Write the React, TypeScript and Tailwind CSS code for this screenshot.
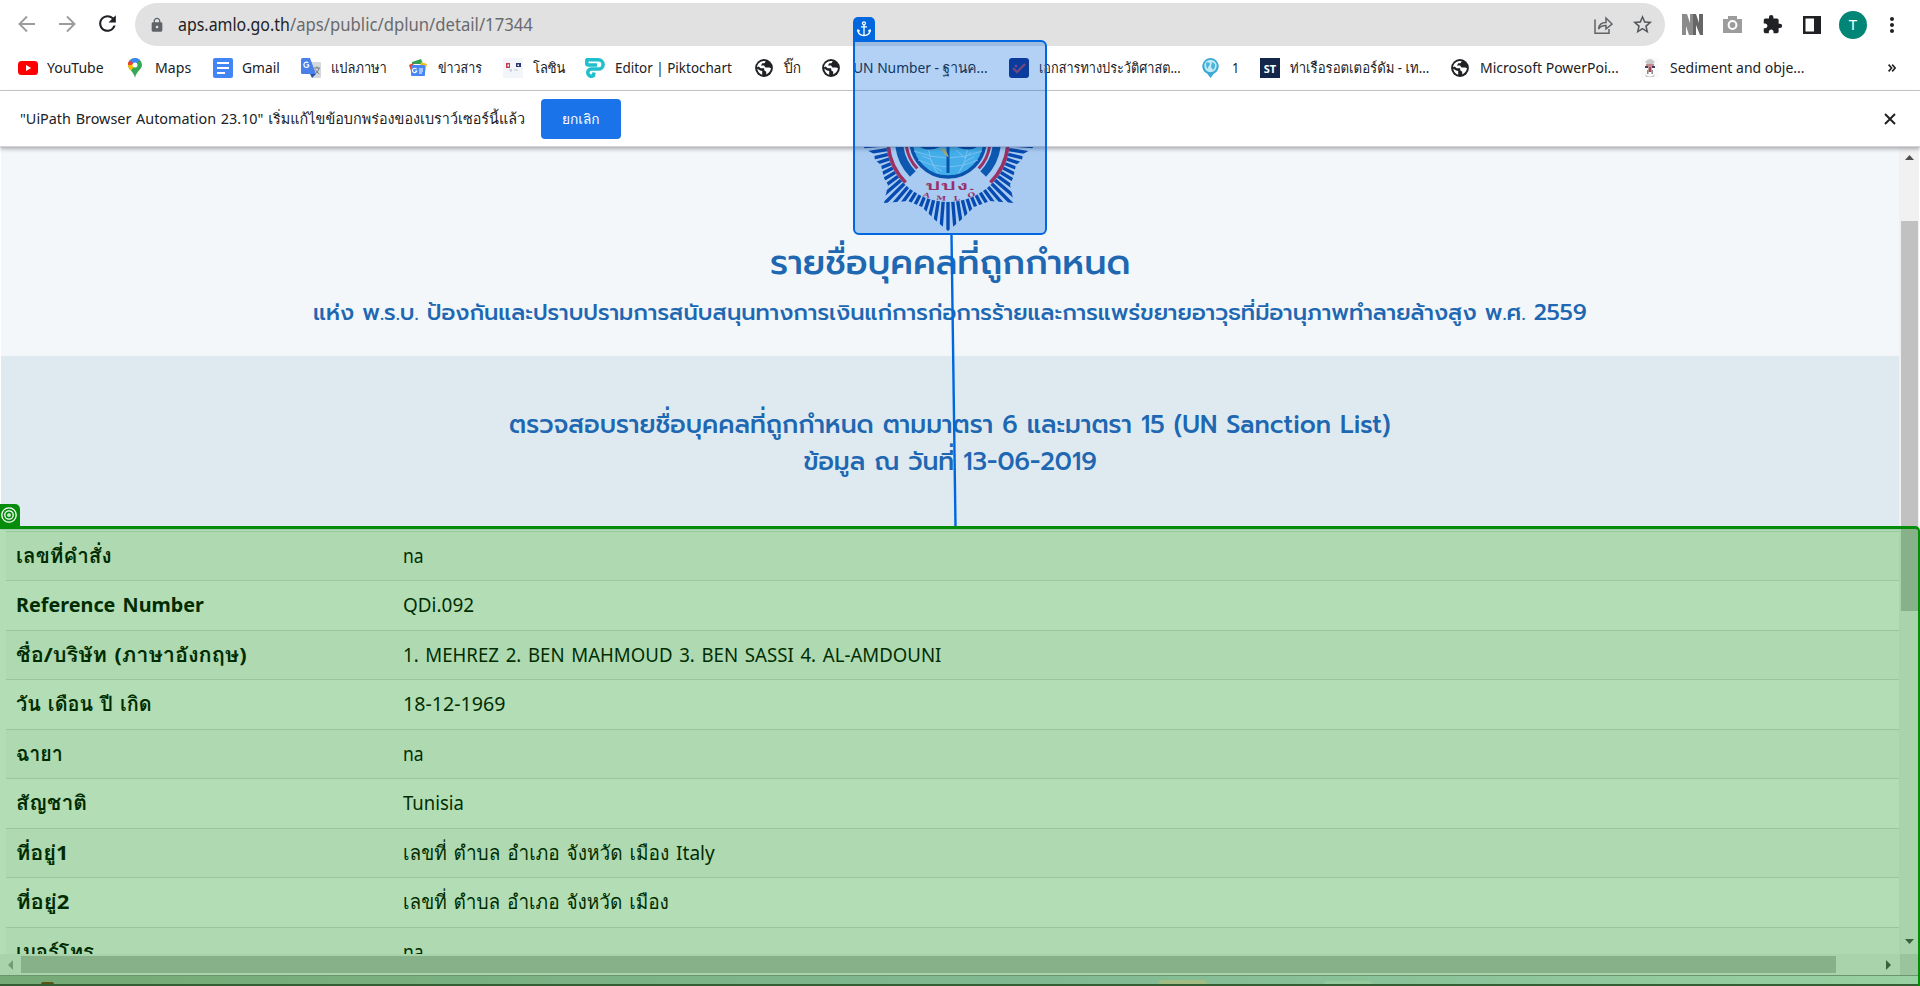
import { useLayoutEffect, useRef, useState, type ReactNode } from "react";
import { MdExtension, MdLock, MdStarBorder, MdRefresh, MdMoreVert } from "react-icons/md";

const UI = "font-['Noto_Sans','Loma',sans-serif]";

/* Single line of text stretched or squeezed to the width of its box. */
function Fit({ className, children }: { className: string; children: ReactNode }) {
  const box = useRef<HTMLDivElement>(null);
  const text = useRef<HTMLSpanElement>(null);
  const [scale, setScale] = useState(1);
  useLayoutEffect(() => {
    if (box.current && text.current) setScale(box.current.clientWidth / text.current.offsetWidth);
  }, []);
  return (
    <div ref={box} className={`shrink-0 whitespace-nowrap ${className}`}>
      <span ref={text} className="inline-block origin-left" style={{ transform: `scaleX(${scale})` }}>
        {children}
      </span>
    </div>
  );
}

function Arrow({ className }: { className: string }) {
  return (
    <svg viewBox="0 0 18 18" className={className} fill="none" stroke="#9a9c9e" strokeWidth="1.9">
      <path d="M17 9H2M9 1.5 1.5 9 9 16.500" />
    </svg>
  );
}

function Globe() {
  return (
    <svg viewBox="0 0 18 18" className="h-[18px] w-[18px]">
      <circle cx="9" cy="9" r="8.900" fill="#1f2124" />
      <path d="M10.800 2.300 9.500 4.200H7.200L6 6.500h3l1.500 2h3.800l1.700.8c-.4 3-2.200 5-4.800 6.100v-2.600l-2-1.600V9.300H5.800L3.600 7.600 2 8.200C2.200 4.800 5 2 9 1.900z" fill="#fff" />
      <path d="M2.300 9.500 5 11.500l2.200.5v3.800C4.600 15.200 2.500 12.500 2.300 9.500z" fill="#fff" />
      <path d="M9.500 4.200 12 3l2.500 2-1.500 2.200h-2.500z" fill="#1f2124" />
    </svg>
  );
}

function YouTube() {
  return (
    <svg viewBox="0 0 20 20" className="h-5 w-5">
      <rect y="3" width="20" height="14" rx="3.500" fill="#f00" />
      <path d="m8 7 5.200 3L8 13z" fill="#fff" />
    </svg>
  );
}

function MapsPin() {
  return (
    <svg viewBox="0 0 14 20" className="h-5 w-[14px]">
      <path d="M7 0a7 7 0 0 0-7 7c0 4.500 5.700 6 7 13 1.300-7 7-8.500 7-13a7 7 0 0 0-7-7z" fill="#34a853" />
      <path d="M7 0a7 7 0 0 0-5.400 2.500L7 7l4.700-5.200A7 7 0 0 0 7 0z" fill="#4285f4" />
      <path d="M1.600 2.500A7 7 0 0 0 0 7h7z" fill="#ea4335" />
      <path d="M0 7c0 2.300 1.400 3.800 3 5.500L9 5z" fill="#fbbc04" />
      <path d="M0 7a7 7 0 0 1 1.600-4.500L5 5.300 3.500 7z" fill="#ea4335" />
      <circle cx="7" cy="7" r="2.500" fill="#fff" />
    </svg>
  );
}

function DocIcon() {
  return (
    <svg viewBox="0 0 20 20" className="h-5 w-5">
      <rect width="20" height="20" rx="2" fill="#4285f4" />
      <path d="M4 5h12M4 10h12M4 15h8" stroke="#fff" strokeWidth="2.200" />
    </svg>
  );
}

function TranslateIcon() {
  return (
    <svg viewBox="0 0 20 20" className="h-5 w-5">
      <path d="M8 4h11q1 0 1 1v14q0 1-1 1h-8z" fill="#d5d8dc" />
      <path d="M1.500 0H9l6 16H1.500Q0 16 0 14.500v-13Q0 0 1.500 0z" fill="#4a80ea" />
      <path d="m9 16h6l-4 4z" fill="#2b55a8" />
      <path d="M8 6.800H5.700M7.300 4.900a2.600 2.600 0 1 0 .8 2.200" fill="none" stroke="#fff" strokeWidth="1.200" />
      <path d="M13 10h6M16 8.500V10M18 10c-.5 3-2.500 5-4 6M14.500 11.500c.5 1.500 2 3.500 3.700 4.300" fill="none" stroke="#6f7a83" />
    </svg>
  );
}

function NewsIcon() {
  return (
    <svg viewBox="0 0 18 18" className="h-[18px] w-[18px]">
      <path d="M3 3 12 0l2 5H3z" fill="#2fa24f" />
      <path d="m0 6 4-2 3 9-4 2z" fill="#e0483b" />
      <path d="m12 3 6 2-2 9-6-2z" fill="#f7bd20" />
      <rect x="2" y="6" width="14" height="11" rx="1" fill="#4886f0" />
      <path d="M7.600 10.300a2.200 2.200 0 1 0 .2 1.700H6M10 10h4M10 12h4M10 14h3" fill="none" stroke="#fff" strokeWidth="1.100" />
    </svg>
  );
}

function FacesIcon() {
  return (
    <svg viewBox="0 0 20 20" className="h-5 w-5">
      <rect width="20" height="20" fill="#f2f5fa" />
      <path d="M3 5h4v5H3z" fill="#c5404c" />
      <path d="M13 5h5v4h-5z" fill="#27396f" />
      <path d="M4.500 6.500h1.500v2H4.500zM14.500 6.500h1.500V8h-1.500z" fill="#fff" />
      <path d="M6 12h3M8 11v3M11 12h4" stroke="#bcc8d8" />
    </svg>
  );
}

function PiktoIcon() {
  return (
    <svg viewBox="0 0 20 20" className="h-5 w-5" fill="none" stroke="#1fc0cb" strokeWidth="3.500">
      <path d="M1 1.800h12.500a4.500 4.500 0 0 1 0 9.200H6a3.600 3.600 0 1 0 2.500 6.500l.5-3" />
      <path d="M1.800 1v4.500q0 1.500 2 1.500H12" />
    </svg>
  );
}

function CheckIcon() {
  return (
    <svg viewBox="0 0 20 20" className="h-5 w-5">
      <rect width="20" height="20" rx="3" fill="#102a82" />
      <path d="m4 10 4 4 8-8" fill="none" stroke="#b03a50" strokeWidth="2" />
      <circle cx="7" cy="8" r="1.200" fill="#b04060" />
    </svg>
  );
}

function PinIcon() {
  return (
    <svg viewBox="0 0 17 20" className="h-5 w-[17px]">
      <path d="M8.500 0a8.300 8.300 0 0 0-3 16L8.500 20l3-4a8.300 8.300 0 0 0-3-16z" fill="#39a9d5" />
      <circle cx="8.500" cy="8" r="6.200" fill="#c4eaf6" />
      <path d="M4 5c2-2 4 0 4 1S6 8 6 10 4 9 4 7zM10 4l3 2v3l-2 3-2-3z" fill="#4cb5dc" />
    </svg>
  );
}

function SedimentIcon() {
  return (
    <svg viewBox="0 0 18 20" className="h-5 w-[18px]">
      <rect width="18" height="20" fill="#fafafa" />
      <path d="M4 4q5-6 10 0l-2 2H6zM4 16q5 5 10 0l-1 3H5z" fill="#c9c9cb" />
      <path d="M5 6h8v3H5z" fill="#c08a8e" />
      <path d="M4 8h3v2H4zM11 8h3v2h-3z" fill="#3c4260" />
      <path d="M7.500 9h3v5h-3z" fill="#a34850" />
      <path d="M6 12h1.500v4H6zM10.500 12H12v4h-1.500z" fill="#888" />
    </svg>
  );
}

const bookmarks: { icon: ReactNode; label: string; slot: string; gap: string; width: string }[] = [
  { icon: <YouTube />, label: "YouTube", slot: "w-[110px]", gap: "w-[29px]", width: "w-[57px]" },
  { icon: <MapsPin />, label: "Maps", slot: "w-[85px]", gap: "w-[27px]", width: "w-9" },
  { icon: <DocIcon />, label: "Gmail", slot: "w-[88px]", gap: "w-[29px]", width: "w-[38px]" },
  { icon: <TranslateIcon />, label: "แปลภาษา", slot: "w-[108px]", gap: "w-[30px]", width: "w-[56px]" },
  { icon: <NewsIcon />, label: "ข่าวสาร", slot: "w-[94px]", gap: "w-[29px]", width: "w-[44px]" },
  { icon: <FacesIcon />, label: "โลซิน", slot: "w-[82px]", gap: "w-[30px]", width: "w-[32px]" },
  { icon: <PiktoIcon />, label: "Editor | Piktochart", slot: "w-[170px]", gap: "w-[30px]", width: "w-[117px]" },
  { icon: <Globe />, label: "ปิ๊ก", slot: "w-[67px]", gap: "w-[29px]", width: "w-[17px]" },
  { icon: <Globe />, label: "UN Number - ฐานค...", slot: "w-[187px]", gap: "w-[31px]", width: "w-[135px]" },
  { icon: <CheckIcon />, label: "เอกสารทางประวัติศาสต...", slot: "w-[193px]", gap: "w-[30px]", width: "w-[142px]" },
  { icon: <PinIcon />, label: "1", slot: "w-[58px]", gap: "w-[30px]", width: "w-[7px]" },
  { icon: <span className="flex h-5 w-5 items-center justify-center bg-[#14264a] text-[11px] font-bold leading-none text-white">ST</span>, label: "ท่าเรือรอตเตอร์ดัม - เท...", slot: "w-[191px]", gap: "w-[30px]", width: "w-[139px]" },
  { icon: <Globe />, label: "Microsoft PowerPoi...", slot: "w-[190px]", gap: "w-[29px]", width: "w-[139px]" },
  { icon: <SedimentIcon />, label: "Sediment and obje...", slot: "w-[229px]", gap: "w-[29px]", width: "w-[135px]" },
];

const rows: { label: string; labelWidth: string; value: string; valueWidth: string }[] = [
  { label: "เลขที่คำสั่ง", labelWidth: "w-[95px]", value: "na", valueWidth: "w-[21px]" },
  { label: "Reference Number", labelWidth: "w-[188px]", value: "QDi.092", valueWidth: "w-[71px]" },
  { label: "ชื่อ/บริษัท (ภาษาอังกฤษ)", labelWidth: "w-[230px]", value: "1. MEHREZ 2. BEN MAHMOUD 3. BEN SASSI 4. AL-AMDOUNI", valueWidth: "w-[538px]" },
  { label: "วัน เดือน ปี เกิด", labelWidth: "w-[136px]", value: "18-12-1969", valueWidth: "w-[102px]" },
  { label: "ฉายา", labelWidth: "w-[47px]", value: "na", valueWidth: "w-[21px]" },
  { label: "สัญชาติ", labelWidth: "w-[71px]", value: "Tunisia", valueWidth: "w-[61px]" },
  { label: "ที่อยู่1", labelWidth: "w-[52px]", value: "เลขที่ ตำบล อำเภอ จังหวัด เมือง Italy", valueWidth: "w-[312px]" },
  { label: "ที่อยู่2", labelWidth: "w-[53px]", value: "เลขที่ ตำบล อำเภอ จังหวัด เมือง", valueWidth: "w-[266px]" },
  { label: "เบอร์โทร", labelWidth: "w-[78px]", value: "na", valueWidth: "w-[21px]" },
];

function arc(r: number, a: number, b: number) {
  const p = (t: number) => `${(88 + r * Math.cos((t * Math.PI) / 180)).toFixed(1)} ${(r * Math.sin((t * Math.PI) / 180)).toFixed(1)}`;
  return `M${p(a)}A${r} ${r} 0 0 1 ${p(b)}`;
}

function Emblem() {
  const rays = Array.from({ length: 41 }, (_, i) => {
    const t = ((i * 4.5) * Math.PI) / 180;
    return `M88 0L${(88 + 110 * Math.cos(t)).toFixed(1)} ${(110 * Math.sin(t)).toFixed(1)}`;
  }).join("");
  return (
    <svg viewBox="0 7 180 88" className="h-[88px] w-[180px]">
      <clipPath id="star">
        <path d="M0 0 5 9 14 14 15 20 21 25 24 38 28 45 24 63 48 61 62 67 75 80 88 91 101 80 114 67 130 61 154 63 150 45 153 38 156 25 162 20 163 14 172 9 177 0z" />
      </clipPath>
      <path d={rays} clipPath="url(#star)" stroke="#0a3f9e" strokeWidth="3.400" />
      <circle cx="88" cy="0" r="62" fill="#f3f7fa" />
      <g fill="none">
        <path d={arc(60, 0, 45)} stroke="#df1c30" strokeWidth="3.600" />
        <path d={arc(60, 135, 180)} stroke="#df1c30" strokeWidth="3.600" />
        <path d={arc(49, 0, 44)} stroke="#1453a0" strokeWidth="8" />
        <path d={arc(49, 136, 180)} stroke="#1453a0" strokeWidth="8" />
        <path d={arc(42, 0, 43)} stroke="#df1c30" strokeWidth="3" />
        <path d={arc(42, 137, 180)} stroke="#df1c30" strokeWidth="3" />
      </g>
      <circle cx="88" cy="0" r="37" fill="#62cdf0" stroke="#104c98" strokeWidth="3.500" />
      <path d="M54 11q34 14 68 0M58 20q30 14 60 0M68 0q0 20 10 34M108 0q0 20-10 34M62 16l8 3 5 8 7 4M100 30l6-9 8-4M96 10l9 8 6-6" fill="none" stroke="#b5e8fa" strokeWidth=".9" />
      <path d="M60 7q8 5 20 0zM97 7q12 5 20 0z" fill="#0d3f8c" />
      <path d="M88 7v26" stroke="#0d4b96" strokeWidth="3" />
      <path d="m80 8 5 1 4 8-3-1z" fill="#e4c452" />
      <text x="90" y="50" textAnchor="middle" textLength="50" lengthAdjust="spacingAndGlyphs" className="fill-[#d81b38] font-['Loma','Noto_Sans_Thai',sans-serif] text-[11px] font-bold">ปปง.</text>
      <g textAnchor="middle" className="fill-[#d81b38] font-['DejaVu_Serif',serif] text-[7px] font-bold">
        <text transform="translate(66 57) rotate(18) scale(1.300 .9)">A</text>
        <text transform="translate(81 60.500) rotate(5) scale(1.300 .9)">M</text>
        <text transform="translate(97 60.500) rotate(-5) scale(1.300 .9)">L</text>
        <text transform="translate(112 57) rotate(-18) scale(1.300 .9)">O</text>
      </g>
    </svg>
  );
}

export default function App() {
  return (
    <div className={`relative flex h-[986px] w-[1920px] flex-col overflow-hidden bg-white text-[#202124] ${UI}`}>
      <header className="flex h-[46px] shrink-0 items-end">
        <div className="flex h-[43px] w-[135px] shrink-0 items-center pb-0.5 pl-[18px]">
          <Arrow className="h-[18px] w-[18px]" />
          <Arrow className="ml-[22px] h-[18px] w-[18px] rotate-180" />
          <MdRefresh className="ml-[19px] h-[25px] w-[25px]" />
        </div>
        <div className="flex h-[43px] w-[1530px] shrink-0 items-center rounded-full bg-[#e1e1e1] pl-[14px]">
          <MdLock className="h-4 w-4 text-[#5f6368]" />
          <Fit className="ml-[13px] w-[112px] text-[17.500px]">aps.amlo.go.th</Fit>
          <Fit className="w-[243px] text-[17.500px] text-[#696b6e]">/aps/public/dplun/detail/17344</Fit>
          <svg viewBox="0 0 19 18" className="ml-auto h-[18px] w-[19px]" fill="none" stroke="#606367" strokeWidth="1.500">
            <path d="M1 3.500v13.700h14V13M4.500 13C5 8 8 6.500 12 6.500V2l6 6-6 5V9.500c-4 0-6 1-7.500 3.500z" />
          </svg>
          <MdStarBorder className="ml-[18px] mr-[11px] h-[23px] w-[23px] text-[#55585c]" />
        </div>
        <div className="flex h-[43px] grow items-center">
          <svg viewBox="0 0 21 21" className="ml-[17px] h-[21px] w-[21px]">
            <path d="M0 0h5l3 9V0h3v21H7l-3-9v9H0z" fill="#8b8b8b" />
            <path d="M11 0h3l3 9V0h4v21h-3l-4-10v10h-3z" fill="#666" />
          </svg>
          <svg viewBox="0 0 19 17" className="ml-5 h-[17px] w-[19px]">
            <path d="M0 3h5V0h9v3h5v14H0z" fill="#9c9c9c" />
            <circle cx="9.500" cy="9" r="3.900" fill="none" stroke="#fff" strokeWidth="2" />
          </svg>
          <MdExtension className="ml-5 h-[21px] w-[21px]" />
          <svg viewBox="0 0 18 18" className="ml-[20px] h-[18px] w-[18px]">
            <path d="M0 0h18v18H0zM2.500 2.500v13H11v-13z" fill="#202124" fillRule="evenodd" />
          </svg>
          <div className="ml-[18px] flex h-7 w-7 items-center justify-center rounded-full bg-[#008577] text-[15px] text-white">T</div>
          <MdMoreVert className="ml-[13px] h-6 w-6" />
        </div>
      </header>

      <nav className="flex h-[45px] shrink-0 items-center border-b border-[#c9cacb] pl-[18px] text-[14.500px]">
        {bookmarks.map((b) => (
          <div key={b.label} className={`flex shrink-0 items-center ${b.slot}`}>
            <span className={`flex shrink-0 ${b.gap}`}>{b.icon}</span>
            <Fit className={b.width}>{b.label}</Fit>
          </div>
        ))}
        <svg viewBox="0 0 8 8" className="ml-[18px] h-2 w-2" fill="none" stroke="#202124" strokeWidth="1.600">
          <path d="m.6.6 3 3.400-3 3.400M4.200.6l3 3.400-3 3.400" />
        </svg>
      </nav>

      <section className="relative z-10 flex h-14 shrink-0 items-center border-b border-[#d6cfd9] bg-white pl-5 shadow-[0_2px_4px_rgba(0,0,0,0.300)]">
        <Fit className="w-[505px] text-[14.500px] [word-spacing:1px]">"UiPath Browser Automation 23.10" เริ่มแก้ไขข้อบกพร่องของเบราว์เซอร์นี้แล้ว</Fit>
        <button className="ml-4 flex h-10 w-20 items-center justify-center rounded-[4px] bg-[#1a73e8] text-[14px] font-medium text-white">
          <Fit className="w-[38px]">ยกเลิก</Fit>
        </button>
        <svg viewBox="0 0 12 12" className="ml-auto mr-6 h-3 w-3" fill="none" stroke="#202124" strokeWidth="2">
          <path d="m1 1 10 10M11 1 1 11" />
        </svg>
      </section>

      <main className="flex h-[807px] shrink-0 pl-px">
        <div className="w-[1898px] shrink-0 overflow-hidden bg-white">
          <div className="flex h-[209px] flex-col items-center bg-[#f3f7fa] font-['Prompt','Noto_Sans_Thai','Noto_Sans',sans-serif] text-[#2067b2]">
            <Emblem />
            <Fit className="mt-1 w-[360px] text-[34px] font-medium leading-[48px]">รายชื่อบุคคลที่ถูกกำหนด</Fit>
            <Fit className="mt-[8px] w-[1274px] text-[22px] font-medium leading-[36px]">แห่ง พ.ร.บ. ป้องกันและปราบปรามการสนับสนุนทางการเงินแก่การก่อการร้ายและการแพร่ขยายอาวุธที่มีอานุภาพทำลายล้างสูง พ.ศ. 2559</Fit>
          </div>
          <div className="flex h-[174px] flex-col items-center bg-[#dfeaf0] pt-[51px] font-['Prompt','Noto_Sans_Thai','Noto_Sans',sans-serif] text-[25px] font-medium leading-[37px] text-[#2067b2]">
            <Fit className="w-[882px]">ตรวจสอบรายชื่อบุคคลที่ถูกกำหนด ตามมาตรา 6 และมาตรา 15 (UN Sanction List)</Fit>
            <Fit className="w-[293px]">ข้อมูล ณ วันที่ 13-06-2019</Fit>
          </div>
          <div className="ml-[5px] pt-[0.600px] font-['Noto_Sans','Loma',sans-serif] text-[20px] leading-[30px] text-black [word-spacing:2px]">
            {rows.map((r) => (
              <div key={r.label} className="flex h-[49.500px] items-center border-t border-[#dddddd] pl-[10px] odd:bg-[#f9f9f9]">
                <div className="w-[387px] shrink-0 font-bold">
                  <Fit className={r.labelWidth}>{r.label}</Fit>
                </div>
                <Fit className={r.valueWidth}>{r.value}</Fit>
              </div>
            ))}
          </div>
        </div>
        <div className="flex w-5 shrink-0 flex-col items-center bg-[#f1f1f1] pt-[8px]">
          <svg viewBox="0 0 9 5" className="h-[5px] w-[9px]"><path d="M0 5 4.500 0 9 5z" fill="#505050" /></svg>
          <div className="mt-[61px] h-[390px] w-[17px] bg-[#c1c1c1]" />
          <svg viewBox="0 0 9 5" className="mt-auto mb-[10px] h-[5px] w-[9px]"><path d="M0 0h9L4.500 5z" fill="#505050" /></svg>
        </div>
      </main>

      <div className="flex h-[22px] shrink-0 items-center border-b border-[#999] bg-[#f1f1f1] pl-2">
        <svg viewBox="0 0 5 10" className="h-[10px] w-[5px]"><path d="M5 0v10L0 5z" fill="#a3a3a3" /></svg>
        <div className="ml-2 h-[17px] w-[1815px] bg-[#c1c1c1]" />
        <svg viewBox="0 0 5 10" className="ml-[50px] h-[10px] w-[5px]"><path d="M0 0v10l5-5z" fill="#505050" /></svg>
        <div className="ml-auto h-full w-5 bg-[#dcdcdc]" />
      </div>
      <footer className="flex h-[10px] shrink-0 items-end border-b-2 border-[#4a4a48] bg-linear-to-r from-[#a8b8a8] from-7% via-[#b8ccd0] via-55% to-[#dbeee6]">
        <div className="ml-[41px] h-[2px] w-[13px] rounded-t-full bg-[#853a15]" />
        <div className="ml-[1105px] h-[4px] w-12 rounded-t bg-[#e9d2bc]" />
        <div className="ml-[117px] h-[3px] w-12 rounded-t bg-[#d5e4df]" />
      </footer>

      <svg viewBox="0 0 10 291" className="absolute left-[949px] top-[235px] h-[291px] w-[10px]">
        <path d="M2.500 0 6.500 291" stroke="#0067df" strokeWidth="2.400" />
      </svg>
      <div className="absolute left-[853px] top-[17px] z-20 flex h-6 w-[22px] items-center justify-center rounded-t-[5px] bg-[#0067df]">
        <svg viewBox="0 0 14 16" className="h-4 w-[14px]" fill="none" stroke="#fff" strokeWidth="1.300">
          <circle cx="7" cy="2.300" r="1.500" />
          <path d="M7 3.800v11M4 5.800h6M1 9c0 4 3 5.500 6 5.700 3-.2 6-1.700 6-5.700M0 10.500 1 9l1.800 1.300M11.200 10.300 13 9l1 1.500" />
        </svg>
      </div>
      <div className="absolute left-[853px] top-[40px] z-20 h-[195px] w-[194px] rounded-r-[6px] rounded-bl-[6px] border-2 border-[#0067df] bg-[#0067df]/30" />
      <div className="absolute left-0 top-[504px] z-20 flex h-[22px] w-5 items-center justify-center rounded-tr-[5px] bg-[#058c0a] pr-[3px]">
        <svg viewBox="0 0 16 16" className="h-4 w-4" fill="none" stroke="#fff" strokeWidth="1.300">
          <circle cx="8" cy="8" r="7.200" /><circle cx="8" cy="8" r="4.200" /><circle cx="8" cy="8" r="1.200" />
        </svg>
      </div>
      <div className="absolute left-0 top-[526px] z-20 h-[460px] w-[1920px] rounded-tr-[5px] border-r-2 border-t-[3px] border-[#058c0a] bg-[#038e08]/30" />
    </div>
  );
}
